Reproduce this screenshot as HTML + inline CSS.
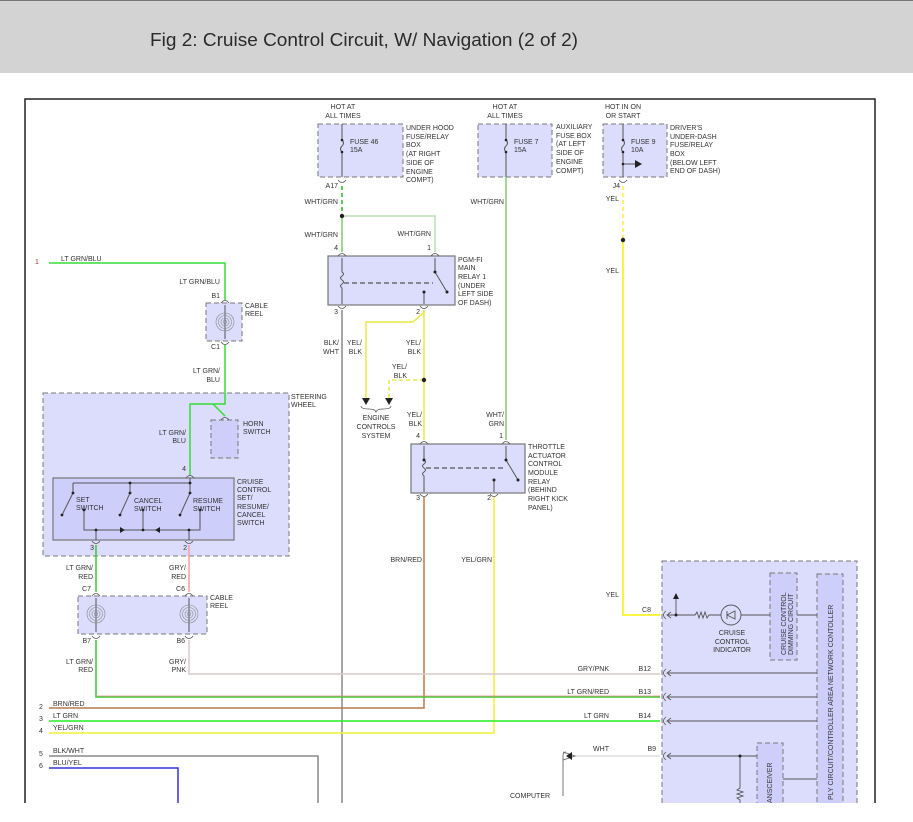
<!DOCTYPE html>
<html><head><meta charset="utf-8"><style>
html,body{margin:0;padding:0;background:#fff;width:913px;height:822px;overflow:hidden}
svg text{font-family:"Liberation Sans",sans-serif;font-size:7px;fill:#333}
</style></head><body>
<svg width="913" height="822" viewBox="0 0 913 822" xmlns="http://www.w3.org/2000/svg">
<defs>
<g id="reel"><circle r="9" fill="none" stroke="#888" stroke-width="0.6"/><circle r="6.5" fill="none" stroke="#888" stroke-width="0.6"/><circle r="4" fill="none" stroke="#888" stroke-width="0.6"/><circle r="1.8" fill="none" stroke="#888" stroke-width="0.6"/></g>
<g id="cup"><path d="M-4,2 Q0,-3 4,2" fill="none" stroke="#555" stroke-width="0.8"/></g>
<g id="cdn"><path d="M-4,-2 Q0,3 4,-2" fill="none" stroke="#555" stroke-width="0.8"/></g>
<g id="lc"><path d="M2,-4 Q-3,0 2,4" fill="none" stroke="#555" stroke-width="0.8"/><path d="M7,-3 L3,0 L7,3" fill="none" stroke="#555" stroke-width="0.8"/></g>
</defs>
<rect x="0" y="0" width="913" height="73" fill="#d3d3d3"/>
<rect x="0" y="0" width="913" height="1" fill="#777"/>
<text x="150" y="46" style="font-size:18px;fill:#2a2a2a" textLength="428" lengthAdjust="spacingAndGlyphs">Fig 2: Cruise Control Circuit, W/ Navigation (2 of 2)</text>
<rect x="25" y="99" width="850" height="720" fill="none" stroke="#222" stroke-width="1.5"/>

<g fill="#dcdcfc" stroke="#777" stroke-width="1" stroke-dasharray="5,3">
<rect x="318" y="124" width="85" height="53"/>
<rect x="478" y="124" width="74" height="53"/>
<rect x="603" y="124" width="64" height="53"/>
<rect x="206" y="303" width="36" height="38"/>
<rect x="43" y="393" width="246" height="163"/>
<rect x="78" y="596" width="129" height="38"/>
<rect x="662" y="561" width="195" height="250"/>
</g>
<g fill="#cdcffa" stroke="#777" stroke-width="1" stroke-dasharray="5,3">
<rect x="211" y="420" width="27" height="38"/>
<rect x="770" y="573" width="27" height="87"/>
<rect x="817" y="574" width="26" height="240"/>
<rect x="757" y="743" width="26" height="70"/>
</g>
<g stroke="#777" stroke-width="1.2">
<rect x="328" y="256" width="127" height="49" fill="#dcdcfc"/>
<rect x="411" y="444" width="114" height="49" fill="#dcdcfc"/>
<rect x="53" y="478" width="181" height="62" fill="#cdcffa"/>
</g>

<g fill="none" stroke-width="1.5">
<path d="M342,186 V216" stroke="#22bb22" stroke-dasharray="4,3"/>
<path d="M342,216 V252" stroke="#7ccf6a"/>
<path d="M342,216 H435 V252" stroke="#b9ddb0"/>
<path d="M506,177 V440" stroke="#7ccf6a"/>
<path d="M623,186 V240" stroke="#ffee44" stroke-dasharray="4,3"/>
<path d="M623,240 V615 H660" stroke="#f5f000"/>
<path d="M342,310 V803" stroke="#888"/>
<path d="M424,310 V440" stroke="#e8e840"/>
<path d="M424,312 L413,322 H366 V398" stroke="#e8e840"/>
<path d="M424,380 H389 V398" stroke="#e8e840" stroke-dasharray="4,3"/>
<path d="M424,497 V708 H49" stroke="#b87a4a"/>
<path d="M494,497 V733 H49" stroke="#f0f030"/>
<path d="M49,263 H225 V300" stroke="#33dd33"/>
<path d="M225,345 V404 L213,404 H190 V475" stroke="#33dd33"/>
<path d="M213,404 L225,416" stroke="#33dd33"/>
<path d="M96,545 V592" stroke="#33cc33"/>
<path d="M189,545 V592" stroke="#f0a0a0"/>
<path d="M96,640 V697 H660" stroke="#33cc33"/>
<path d="M97,696 H660" stroke="#f08080" stroke-width="0.8"/>
<path d="M189,640 V674 H660" stroke="#d8c8c8"/>
<path d="M49,721 H660" stroke="#22ee22"/>
<path d="M49,756 H318 V803" stroke="#888"/>
<path d="M49,768 H178 V803" stroke="#3333dd"/>
<path d="M576,756 H660" stroke="#ddd"/>
</g>
<path d="M563,752 L575,756 L563,760" fill="none" stroke="#777"/>
<polygon points="572,752 566,756 572,760" fill="#222"/>
<g fill="none" stroke="#555" stroke-width="0.9">
<path d="M668,615 H695 l2,-3 2,6 2,-6 2,6 2,-6 2,6 2,-3 H721"/>
<circle cx="731" cy="615" r="10"/>
<path d="M741,615 H770 M797,615 H817 M676,615 V598"/>
<path d="M668,673 H817 M668,697 H817 M668,721 H817 M668,756 H757 M783,779 H817"/>
<path d="M740,756 V788 l-3,2 6,2 -6,2 6,2 -6,2 3,2 V803"/>
<path d="M727,611 V619 M727,615 L735,611 V619 Z"/>
</g>
<circle cx="676" cy="615" r="1.5" fill="#222"/><circle cx="740" cy="756" r="1.5" fill="#222"/>
<polygon points="673,599 676,593 679,599" fill="#222"/>
<g fill="#555"><g transform="translate(664,615)"><use href="#lc"/></g><g transform="translate(664,673)"><use href="#lc"/></g><g transform="translate(664,697)"><use href="#lc"/></g><g transform="translate(664,721)"><use href="#lc"/></g><g transform="translate(664,756)"><use href="#lc"/></g></g>
<text transform="translate(786,655) rotate(-90)">CRUISE CONTROL</text>
<text transform="translate(793,655) rotate(-90)">DIMMING CIRCUIT</text>
<text transform="translate(833,800) rotate(-90)">PLY CIRCUIT/CONTROLLER AREA NETWORK CONTOLLER</text>
<text transform="translate(772,803) rotate(-90)">ANSCEIVER</text>
<g text-anchor="middle"><text x="732" y="635">CRUISE</text><text x="732" y="644">CONTROL</text><text x="732" y="652">INDICATOR</text></g>

<g fill="none" stroke="#555" stroke-width="1">
<path d="M342,124 V140 q3,3 0,6 q-3,3 0,6 V177"/>
<path d="M506,124 V140 q3,3 0,6 q-3,3 0,6 V177"/>
<path d="M623,124 V140 q3,3 0,6 q-3,3 0,6 V177 M623,164 H635"/>
<path d="M342,258 V272 q3,2 0,4 q-3,2 0,4 q3,2 0,4 q-3,2 0,4 V304"/>
<path d="M435,258 V272 L447,292 M424,292 V304"/>
<path d="M424,446 V460 q3,2 0,4 q-3,2 0,4 q3,2 0,4 q-3,2 0,4 V492"/>
<path d="M506,446 V460 L518,480 M494,480 V492"/>
<path d="M225,305 V339 M96,598 V632 M189,598 V632"/>
<path d="M73,483 H190 V478 M73,483 V493 L62,515 M130,483 V493 L120,515 M190,483 V493 L180,515 M84,510 V530 H200 V510 M143,510 V530 M96,530 V540 M189,530 V540"/>
</g>
<g stroke="#555" stroke-width="1.2" stroke-dasharray="5,3"><path d="M344,283 H433"/><path d="M426,468 H504"/></g>
<polygon points="635,160 642,164 635,168" fill="#222"/>
<g fill="#222">
<circle cx="342" cy="216" r="2.2"/><circle cx="623" cy="240" r="2.2"/><circle cx="424" cy="380" r="2.2"/>
<circle cx="342" cy="140" r="1.3"/><circle cx="342" cy="152" r="1.3"/><circle cx="506" cy="140" r="1.3"/><circle cx="506" cy="152" r="1.3"/><circle cx="623" cy="140" r="1.3"/><circle cx="623" cy="152" r="1.3"/><circle cx="623" cy="164" r="1.3"/>
<circle cx="435" cy="272" r="1.5"/><circle cx="447" cy="292" r="1.5"/><circle cx="424" cy="292" r="1.5"/>
<circle cx="506" cy="460" r="1.5"/><circle cx="518" cy="480" r="1.5"/><circle cx="494" cy="480" r="1.5"/><circle cx="424" cy="460" r="1.5"/>
<circle cx="73" cy="493" r="1.4"/><circle cx="62" cy="515" r="1.4"/><circle cx="84" cy="510" r="1.4"/><circle cx="130" cy="483" r="1.4"/><circle cx="130" cy="493" r="1.4"/><circle cx="120" cy="515" r="1.4"/><circle cx="143" cy="510" r="1.4"/><circle cx="190" cy="483" r="1.4"/><circle cx="190" cy="493" r="1.4"/><circle cx="180" cy="515" r="1.4"/><circle cx="200" cy="510" r="1.4"/><circle cx="96" cy="530" r="1.4"/><circle cx="143" cy="530" r="1.4"/><circle cx="189" cy="530" r="1.4"/>
<polygon points="120,527 120,533 125,530"/><polygon points="160,527 160,533 155,530"/>
<polygon points="362,398 370,398 366,405"/><polygon points="385,398 393,398 389,405"/>
</g>
<path d="M361,406 q0,3 8,3 q6,0 7,3 q1,-3 7,-3 q8,0 8,-3" fill="none" stroke="#555" stroke-width="0.7"/>
<path d="M566,752 q-3,0 -3,4 v40" fill="none" stroke="#777" stroke-width="1"/>
<use href="#reel" x="225" y="322"/><use href="#reel" x="96" y="614"/><use href="#reel" x="189" y="614"/>
<g>
<use href="#cdn" x="342" y="182"/><use href="#cdn" x="623" y="182"/>
<use href="#cup" x="342" y="254"/><use href="#cup" x="435" y="254"/><use href="#cdn" x="342" y="308"/><use href="#cdn" x="424" y="308"/>
<use href="#cup" x="424" y="442"/><use href="#cup" x="506" y="442"/><use href="#cdn" x="424" y="496"/><use href="#cdn" x="494" y="496"/>
<use href="#cup" x="225" y="301"/><use href="#cdn" x="225" y="344"/><use href="#cup" x="225" y="418"/><use href="#cup" x="190" y="476"/>
<use href="#cdn" x="96" y="543"/><use href="#cdn" x="189" y="543"/><use href="#cup" x="96" y="594"/><use href="#cup" x="189" y="594"/><use href="#cdn" x="96" y="638"/><use href="#cdn" x="189" y="638"/>
</g>

<g text-anchor="middle">
<text x="343" y="109">HOT AT</text><text x="343" y="118">ALL TIMES</text>
<text x="505" y="109">HOT AT</text><text x="505" y="118">ALL TIMES</text>
<text x="623" y="109">HOT IN ON</text><text x="623" y="118">OR START</text>
<text x="376" y="420">ENGINE</text><text x="376" y="429">CONTROLS</text><text x="376" y="438">SYSTEM</text>
</g>
<text x="350" y="144">FUSE 46</text><text x="350" y="152">15A</text>
<text x="514" y="144">FUSE 7</text><text x="514" y="152">15A</text>
<text x="631" y="144">FUSE 9</text><text x="631" y="152">10A</text>
<text x="406" y="130">UNDER HOOD</text><text x="406" y="139">FUSE/RELAY</text><text x="406" y="147">BOX</text><text x="406" y="156">(AT RIGHT</text><text x="406" y="165">SIDE OF</text><text x="406" y="174">ENGINE</text><text x="406" y="182">COMPT)</text>
<text x="556" y="129">AUXILIARY</text><text x="556" y="138">FUSE BOX</text><text x="556" y="146">(AT LEFT</text><text x="556" y="155">SIDE OF</text><text x="556" y="164">ENGINE</text><text x="556" y="173">COMPT)</text>
<text x="670" y="130">DRIVER'S</text><text x="670" y="139">UNDER-DASH</text><text x="670" y="147">FUSE/RELAY</text><text x="670" y="156">BOX</text><text x="670" y="165">(BELOW LEFT</text><text x="670" y="173">END OF DASH)</text>
<text x="458" y="262">PGM-FI</text><text x="458" y="270">MAIN</text><text x="458" y="279">RELAY 1</text><text x="458" y="288">(UNDER</text><text x="458" y="296">LEFT SIDE</text><text x="458" y="305">OF DASH)</text>
<text x="528" y="449">THROTTLE</text><text x="528" y="458">ACTUATOR</text><text x="528" y="466">CONTROL</text><text x="528" y="475">MODULE</text><text x="528" y="484">RELAY</text><text x="528" y="492">(BEHIND</text><text x="528" y="501">RIGHT KICK</text><text x="528" y="510">PANEL)</text>
<text x="245" y="308">CABLE</text><text x="245" y="316">REEL</text>
<text x="210" y="600">CABLE</text><text x="210" y="608">REEL</text>
<text x="291" y="399">STEERING</text><text x="291" y="407">WHEEL</text>
<text x="243" y="426">HORN</text><text x="243" y="434">SWITCH</text>
<text x="237" y="484">CRUISE</text><text x="237" y="492">CONTROL</text><text x="237" y="500">SET/</text><text x="237" y="509">RESUME/</text><text x="237" y="517">CANCEL</text><text x="237" y="525">SWITCH</text>
<text x="76" y="502">SET</text><text x="76" y="510">SWITCH</text>
<text x="134" y="503">CANCEL</text><text x="134" y="511">SWITCH</text>
<text x="193" y="503">RESUME</text><text x="193" y="511">SWITCH</text>
<text x="510" y="798">COMPUTER</text>
<text x="35" y="264" style="fill:#a33">1</text>
<text x="39" y="709">2</text><text x="39" y="721">3</text><text x="39" y="733">4</text><text x="39" y="756">5</text><text x="39" y="768">6</text>
<text x="53" y="706">BRN/RED</text><text x="53" y="718">LT GRN</text><text x="53" y="730">YEL/GRN</text><text x="53" y="753">BLK/WHT</text><text x="53" y="765">BLU/YEL</text>
<text x="61" y="261">LT GRN/BLU</text>
<g text-anchor="end">
<text x="220" y="284">LT GRN/BLU</text><text x="220" y="298">B1</text><text x="220" y="349">C1</text>
<text x="220" y="373">LT GRN/</text><text x="220" y="382">BLU</text>
<text x="186" y="435">LT GRN/</text><text x="186" y="443">BLU</text><text x="186" y="471">4</text>
<text x="94" y="550">3</text><text x="187" y="550">2</text>
<text x="93" y="570">LT GRN/</text><text x="93" y="579">RED</text><text x="186" y="570">GRY/</text><text x="186" y="579">RED</text>
<text x="91" y="591">C7</text><text x="185" y="591">C6</text><text x="91" y="643">B7</text><text x="185" y="643">B6</text>
<text x="93" y="664">LT GRN/</text><text x="93" y="672">RED</text><text x="186" y="664">GRY/</text><text x="186" y="672">PNK</text>
<text x="338" y="188">A17</text><text x="338" y="204">WHT/GRN</text><text x="338" y="237">WHT/GRN</text><text x="338" y="250">4</text>
<text x="431" y="236">WHT/GRN</text><text x="431" y="250">1</text>
<text x="338" y="314">3</text><text x="420" y="314">2</text>
<text x="339" y="345">BLK/</text><text x="339" y="354">WHT</text>
<text x="362" y="345">YEL/</text><text x="362" y="354">BLK</text>
<text x="421" y="345">YEL/</text><text x="421" y="354">BLK</text>
<text x="407" y="369">YEL/</text><text x="407" y="378">BLK</text>
<text x="422" y="417">YEL/</text><text x="422" y="426">BLK</text><text x="420" y="438">4</text>
<text x="504" y="204">WHT/GRN</text>
<text x="504" y="417">WHT/</text><text x="504" y="426">GRN</text><text x="503" y="438">1</text>
<text x="420" y="500">3</text><text x="491" y="500">2</text>
<text x="422" y="562">BRN/RED</text><text x="492" y="562">YEL/GRN</text>
<text x="619" y="201">YEL</text><text x="619" y="273">YEL</text><text x="620" y="188">J4</text>
<text x="619" y="597">YEL</text><text x="651" y="612">C8</text>
<text x="609" y="671">GRY/PNK</text><text x="651" y="671">B12</text>
<text x="609" y="694">LT GRN/RED</text><text x="651" y="694">B13</text>
<text x="609" y="718">LT GRN</text><text x="651" y="718">B14</text>
<text x="609" y="751">WHT</text><text x="656" y="751">B9</text>
</g>
<rect x="0" y="803" width="913" height="19" fill="#fff"/>
</svg>
</body></html>
